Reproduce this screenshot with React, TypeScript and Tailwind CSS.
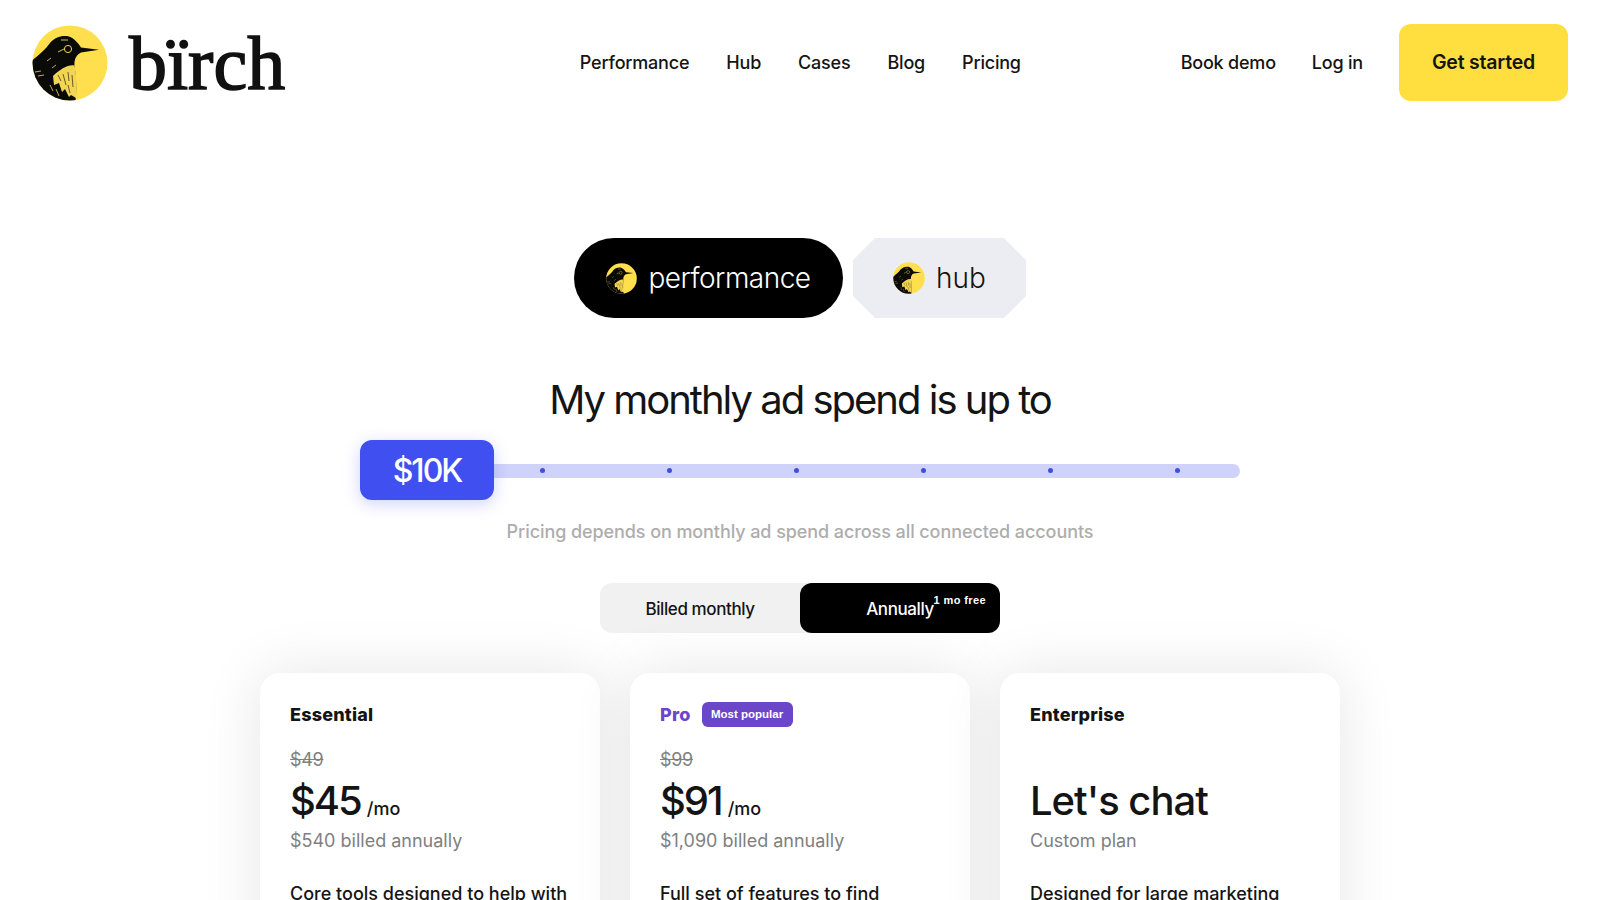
import React from "react"

function Bird({ id, className }: { id: string; className: string }) {
  return (
    <svg viewBox="0 0 76 76" className={className}>
      <defs>
        <clipPath id={id}>
          <circle cx="38" cy="38" r="37.5" />
        </clipPath>
      </defs>
      <g clipPath={`url(#${id})`}>
        <rect width="76" height="76" fill="#ffdf4d" />
        {/* body and head */}
        <path
          d="M-2 37 C6 31 13 25 18 18 C23 12 30 10 37 11.500 C42 13 46 18 49 22.500 L67 24.800 L49 27.500 C44 30 42 35 42.500 41 C44 50 45 62 43.500 76 L-2 76 Z"
          fill="#0a0a08"
        />
        {/* throat patch */}
        <path
          d="M21 51 C28 44 37 39 42.500 40.500 C44.500 50 45 60 44 73 L39 70 L37 72 L33 64 L30 67 L27 58 L22 60 Z"
          fill="#f2d552"
        />
        <g stroke="#0a0a08" strokeWidth="0.6" fill="none">
          <path d="M26 50 L29 56 M31 49 L34 60 M36 47 L37 56 M40 50 L41 62 M36 60 L38 68" />
        </g>
        {/* wing flecks */}
        <g stroke="#f2d552" strokeWidth="0.8" fill="none">
          <path d="M3 47 L9 46 M6 51 L12 50 M15 36 L19 33 M20 43 L24 40 M18 60 L21 66 M24 64 L27 71" />
        </g>
        {/* eye */}
        <circle cx="36" cy="24" r="3.600" fill="none" stroke="#f2d552" strokeWidth="1" />
        <path d="M32 24 L26 27 M29 15 L36 15" stroke="#f2d552" strokeWidth="0.9" fill="none" />
      </g>
    </svg>
  )
}

const navLinks = ["Performance", "Hub", "Cases", "Blog", "Pricing"]
const sliderDots = [0, 1, 2, 3, 4, 5]

const plans = [
  {
    name: "Essential",
    oldPrice: "$49",
    price: "$45",
    note: "$540 billed annually",
    text: "Core tools designed to help with",
  },
  {
    name: "Pro",
    badge: "Most popular",
    oldPrice: "$99",
    price: "$91",
    note: "$1,090 billed annually",
    text: "Full set of features to find",
  },
  {
    name: "Enterprise",
    price: "Let's chat",
    note: "Custom plan",
    text: "Designed for large marketing",
  },
]

export default function App() {
  return (
    <div className="h-[900px] overflow-hidden bg-white text-[#141414] font-['Inter',sans-serif]">
      {/* Header */}
      <header className="flex items-center justify-between pt-6 pl-8 pr-8">
        <div className="flex w-[290px] items-center gap-[21px]">
          <Bird id="logo-bird" className="h-[76px] w-[76px]" />
          <span className="font-['Liberation_Serif',serif] text-[76px] font-normal leading-[76px] text-[#111] [-webkit-text-stroke:1.6px_#111]">
            bïrch
          </span>
        </div>
        <nav className="ml-[98px] flex items-center gap-[37px] text-[18px] font-medium tracking-[-0.2px]">
          {navLinks.map((link) => (
            <a key={link}>{link}</a>
          ))}
        </nav>
        <div className="flex items-center gap-9 text-[18px] font-medium tracking-[-0.2px]">
          <a>Book demo</a>
          <a>Log in</a>
          <a className="flex h-[77px] w-[169px] items-center justify-center rounded-xl bg-[#ffdf40] text-[19.500px] font-semibold">
            Get started
          </a>
        </div>
      </header>

      <main className="flex flex-col items-center">
        {/* Product tabs */}
        <div className="mt-[137px] flex gap-[10px]">
          <div className="flex h-20 w-[269px] items-center justify-center gap-[11px] rounded-[40px] bg-black text-[28px] font-light tracking-[-0.5px] text-white">
            <Bird id="tab-bird-a" className="h-[31px] w-[31px]" />
            performance
          </div>
          <div className="flex h-20 w-[173px] items-center justify-center gap-[11px] bg-[#ecedf3] text-[28px] font-light [clip-path:polygon(22px_0,calc(100%_-_22px)_0,100%_22px,100%_calc(100%_-_22px),calc(100%_-_22px)_100%,22px_100%,0_calc(100%_-_22px),0_22px)]">
            <Bird
              id="tab-bird-b"
              className="h-8 w-8 [clip-path:polygon(30%_0,70%_0,100%_30%,100%_70%,70%_100%,30%_100%,0_70%,0_30%)]"
            />
            hub
          </div>
        </div>

        <h1 className="mt-[58px] text-[40px] font-normal leading-[48px] tracking-[-2px]">
          My monthly ad spend is up to
        </h1>

        {/* Spend slider */}
        <div className="mt-4 flex w-[880px] items-center">
          <div className="z-10 flex h-[60px] w-[134px] items-center justify-center rounded-xl bg-[#4050f0] pt-[2px] text-[32px] font-medium tracking-[-2px] text-white shadow-[0_4px_16px_rgba(64,80,240,0.25)]">
            $10K
          </div>
          <div className="mt-px flex h-[14px] flex-1 items-center justify-between rounded-r-full bg-[#d0d3f9] pl-[46px] pr-[60px]">
            {sliderDots.map((dot) => (
              <span key={dot} className="h-[5px] w-[5px] rounded-full bg-[#4050d8]" />
            ))}
          </div>
        </div>

        <p className="mt-5 text-[18px] font-medium leading-6 tracking-[-0.08px] text-[#adadad]">
          Pricing depends on monthly ad spend across all connected accounts
        </p>

        {/* Billing toggle */}
        <div className="mt-[39px] flex h-[50px] w-[400px] rounded-xl bg-[#f1f1f1] text-[17px] font-medium tracking-[-0.4px]">
          <div className="flex w-[200px] items-center justify-center pt-[4px]">Billed monthly</div>
          <div className="relative flex w-[200px] items-center justify-center rounded-xl bg-black pt-[4px] text-white">
            Annually
            <span className="absolute right-[14px] top-[9px] font-['Liberation_Sans',sans-serif] text-[11px] font-bold leading-4 tracking-[0.4px]">
              1 mo free
            </span>
          </div>
        </div>

        {/* Plans */}
        <div className="mt-10 flex gap-[30px]">
          {plans.map((plan) => (
            <div
              key={plan.name}
              className="h-[300px] w-[340px] rounded-[20px] bg-white px-[30px] pt-[27px] shadow-[0_0_60px_rgba(0,0,0,0.1)]"
            >
              <div className="flex h-7 items-center gap-[11px]">
                <span
                  className={
                    plan.badge
                      ? "text-[18px] font-extrabold tracking-[0.2px] text-[#6b46c9]"
                      : "text-[18px] font-extrabold tracking-[0.2px] text-[#141414]"
                  }
                >
                  {plan.name}
                </span>
                {plan.badge && (
                  <span className="mt-px flex h-[25px] w-[91px] items-center justify-center rounded-md bg-[#6b46c9] pt-px font-['Liberation_Sans',sans-serif] text-[11.500px] font-bold text-white">
                    {plan.badge}
                  </span>
                )}
              </div>
              <div className="mt-5 h-6 text-[18px] leading-6 tracking-[-0.3px] text-[#808080] line-through">
                {plan.oldPrice}
              </div>
              <div className="mt-[3px] flex h-[52px] items-baseline gap-[6px]">
                <span
                  className={
                    plan.oldPrice
                      ? "text-[40px] font-medium leading-[52px] tracking-[-2px]"
                      : "text-[40px] font-medium leading-[52px] tracking-[-1px]"
                  }
                >
                  {plan.price}
                </span>
                {plan.oldPrice && <span className="text-[18px] font-medium">/mo</span>}
              </div>
              <div className="h-7 text-[18px] leading-7 text-[#808080]">{plan.note}</div>
              <p className="mt-[26px] whitespace-nowrap text-[18px] font-medium leading-[26px] text-[#141414]">
                {plan.text}
              </p>
            </div>
          ))}
        </div>
      </main>
    </div>
  )
}
